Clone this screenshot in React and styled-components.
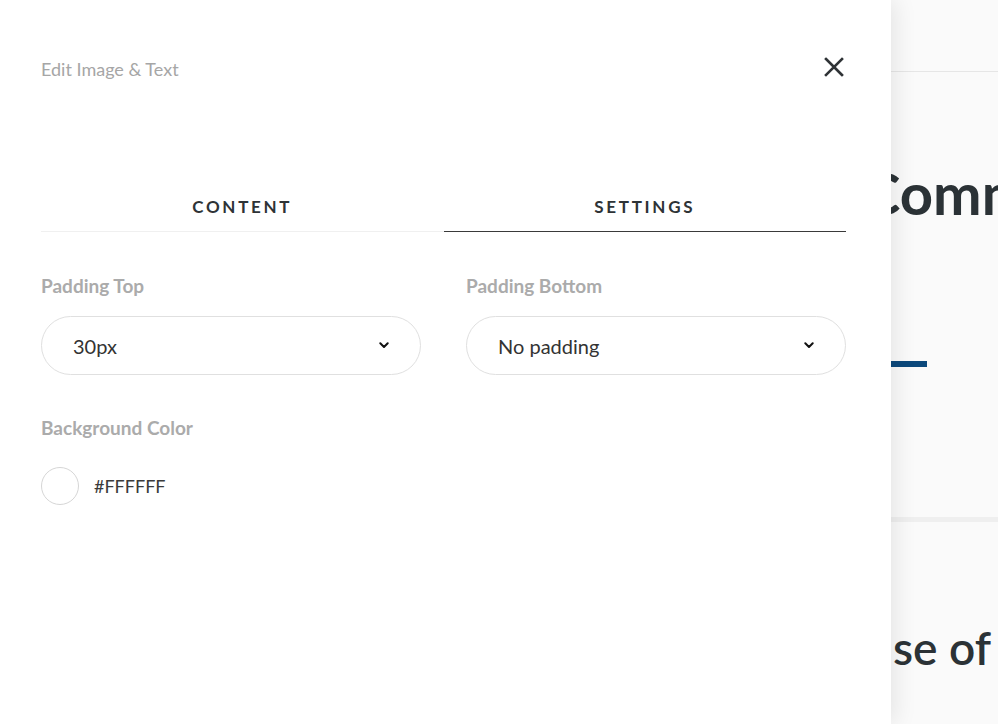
import React from "react";
import styled, { createGlobalStyle } from "styled-components";

const GlobalStyle = createGlobalStyle`
  html, body {
    margin: 0;
    padding: 0;
    height: 100%;
    overflow: hidden;
  }
  body {
    font-family: Lato, "Open Sans", "Liberation Sans", sans-serif;
    background: #fafafa;
  }
  #root {
    height: 100%;
  }
`;

const Page = styled.div`
  position: relative;
  width: 100%;
  height: 100%;
  overflow: hidden;
  background: #fafafa;
`;

// page behind the drawer
const TopBar = styled.div`
  height: 71px;
  border-bottom: 1px solid #e6e6e6;
  background: #fafafa;
`;

const Section = styled.section`
  padding: ${p => p.pad};
  display: flex;
  flex-direction: column;
  align-items: flex-start;
`;

const Heading = styled.h1`
  margin: 0;
  font-size: ${p => p.size}px;
  font-weight: ${p => p.weight};
  line-height: 1;
  color: #2b3236;
  white-space: nowrap;
`;

const Accent = styled.div`
  width: 72px;
  height: 6px;
  background: #0c497c;
  margin-left: 855px;
`;

const Band = styled.div`
  height: 5px;
  background: #efefef;
`;

// drawer
const Drawer = styled.aside`
  position: absolute;
  top: 0;
  left: 0;
  bottom: 0;
  width: 891px;
  background: #fff;
  box-shadow: 4px 0 22px rgba(0, 0, 0, 0.09);
  padding: 0 45px 0 41px;
  box-sizing: border-box;
`;

const DrawerHead = styled.header`
  height: 137px;
  display: flex;
  align-items: flex-start;
  justify-content: space-between;
  padding-top: 57px;
  box-sizing: border-box;
`;

const Title = styled.h2`
  margin: 0;
  font-size: 18px;
  font-weight: 400;
  color: #a6a6a6;
  line-height: 24px;
`;

const Close = styled.button`
  border: 0;
  background: none;
  padding: 0;
  margin: 0 2px 0 0;
  width: 20px;
  height: 20px;
  cursor: pointer;
  display: flex;
  align-items: center;
  justify-content: center;
`;

const Tabs = styled.nav`
  display: grid;
  grid-template-columns: 1fr 1fr;
`;

const Tab = styled.div`
  text-align: center;
  font-size: 17px;
  font-weight: 700;
  letter-spacing: 2.7px;
  color: #2e3336;
  padding: 59px 0 14px;
  border-bottom: 1px solid ${p => (p.active ? "#3a3a3a" : "#f0f0f0")};
`;

const Fields = styled.div`
  display: grid;
  grid-template-columns: 1fr 1fr;
  column-gap: 45px;
  padding-top: 42px;
`;

const Field = styled.div`
  display: flex;
  flex-direction: column;
`;

const Label = styled.label`
  font-size: 19px;
  font-weight: 700;
  color: #ababab;
  line-height: 24px;
  margin-bottom: 18px;
`;

const Select = styled.div`
  height: 59px;
  box-sizing: border-box;
  border: 1px solid #e0e0e0;
  border-radius: 30px;
  display: flex;
  align-items: center;
  justify-content: space-between;
  padding: 0 31px 0 31px;
  font-size: 20px;
  color: #333;
`;

const ColorBlock = styled.div`
  padding-top: 41px;
  display: flex;
  flex-direction: column;
`;

const ColorRow = styled.div`
  display: flex;
  align-items: center;
  gap: 15px;
  margin-top: 9px;
`;

const Swatch = styled.span`
  width: 36px;
  height: 36px;
  border-radius: 50%;
  border: 1px solid #d6d6d6;
  background: ${p => p.color};
`;

const ColorValue = styled.span`
  font-size: 18px;
  color: #3a3a3a;
`;

const Chevron = () => (
  <svg width="10" height="7" viewBox="0 0 10 7">
    <path d="M1.3 1.3 L5 5 L8.7 1.3" fill="none" stroke="#111" strokeWidth="2" strokeLinecap="round" strokeLinejoin="round" />
  </svg>
);

const XIcon = () => (
  <svg width="20" height="20" viewBox="0 0 20 20">
    <path d="M2 2 L18 18 M18 2 L2 18" stroke="#2f3336" strokeWidth="2.6" strokeLinecap="square" />
  </svg>
);

const SelectBox = ({ value }) => (
  <Select>
    <span>{value}</span>
    <Chevron />
  </Select>
);

export default function App() {
  return (
    <Page>
      <GlobalStyle />
      <TopBar />
      <Section pad="92px 0 0 862px">
        <Heading size={58} weight={700}>Community</Heading>
      </Section>
      <Section pad="139px 0 150px 0">
        <Accent />
      </Section>
      <Band />
      <Section pad="103px 0 0 893px">
        <Heading size={46} weight={600}>se of</Heading>
      </Section>

      <Drawer>
        <DrawerHead>
          <Title>Edit Image &amp; Text</Title>
          <Close aria-label="Close">
            <XIcon />
          </Close>
        </DrawerHead>
        <Tabs>
          <Tab>CONTENT</Tab>
          <Tab active>SETTINGS</Tab>
        </Tabs>
        <Fields>
          <Field>
            <Label>Padding Top</Label>
            <SelectBox value="30px" />
          </Field>
          <Field>
            <Label>Padding Bottom</Label>
            <SelectBox value="No padding" />
          </Field>
        </Fields>
        <ColorBlock>
          <Label as="div">Background Color</Label>
          <ColorRow>
            <Swatch color="#ffffff" />
            <ColorValue>#FFFFFF</ColorValue>
          </ColorRow>
        </ColorBlock>
      </Drawer>
    </Page>
  );
}
